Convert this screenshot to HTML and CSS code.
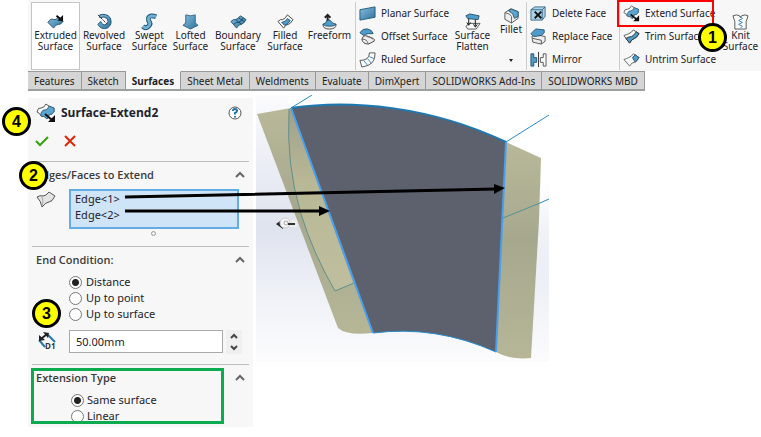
FILE: index.html
```html
<!DOCTYPE html>
<html lang="en">
<head>
<meta charset="utf-8">
<title>Surface-Extend2</title>
<link rel="stylesheet" href="styles.css">
</head>
<body>
<svg class="defs" aria-hidden="true">
  <defs>
    <linearGradient id="steel" x1="0" y1="0" x2="1" y2="1"><stop offset="0" stop-color="#86bfe0"/><stop offset="1" stop-color="#2f7099"/></linearGradient>
    <symbol id="i-extend" viewBox="0 0 20 20">
      <path d="M1 9Q2 4 5 5Q8 5 10 1Q13 4 18 5Q19 9 16 11Q12 11 11 16Q8 12 5 13Q4 10 1 9Z" fill="#fafafa" stroke="#555"/>
      <path d="M5 10Q7 6 9 7Q12 7 13 3L18 5Q19 9 16 11Q12 11 11 16Q9 13 5 13Z" fill="#5ba6d0" stroke="#3a6580"/>
      <path d="M9 11L16 17" stroke="#111" stroke-width="2"/><path d="M19 19V12L12 19Z" fill="#111"/>
    </symbol>
  </defs>
</svg>

<header class="ribbon">
  <button class="tool tool-active">
    <svg class="icon" viewBox="0 0 18 18"><path d="M1 10Q4 5 7 7Q10 8 12 4L17 9Q14 13 12 12Q9 12 7 16Z" fill="url(#steel)" stroke="#1f5273"/><path d="M10 3L14 6" stroke="#111" stroke-width="2"/><path d="M17 2V9L11 8Z" fill="#111"/></svg>
    <span>Extruded<br>Surface</span>
  </button>
  <button class="tool">
    <svg class="icon" viewBox="0 0 18 18"><path d="M4 2Q11 0 15 5Q18 12 12 16Q5 18 2 12L5 9Q7 14 11 12Q14 9 12 6Q9 3 4 5Z" fill="url(#steel)" stroke="#1f5273"/><path d="M2 2L12 12" stroke="#333" stroke-dasharray="3 1"/></svg>
    <span>Revolved<br>Surface</span>
  </button>
  <button class="tool">
    <svg class="icon" viewBox="0 0 18 18"><path d="M2 14Q5 17 8 14Q11 11 8 8Q7 4 11 3Q14 3 16 4" fill="none" stroke="#1f5273" stroke-width="5"/><path d="M2 14Q5 17 8 14Q11 11 8 8Q7 4 11 3Q14 3 16 4" fill="none" stroke="#70b0d6" stroke-width="3"/></svg>
    <span>Swept<br>Surface</span>
  </button>
  <button class="tool">
    <svg class="icon" viewBox="0 0 18 18"><path d="M4 2Q9 4 14 2V10Q15 12 17 13L9 17L1 13Q4 12 4 9Z" fill="url(#steel)" stroke="#2c6489"/></svg>
    <span>Lofted<br>Surface</span>
  </button>
  <button class="tool">
    <svg class="icon" viewBox="0 0 18 18"><path d="M1 9Q4 6 6 7Q9 6 11 3L17 7Q14 12 12 12Q9 12 7 16Z" fill="url(#steel)" stroke="#1f5273"/><path d="M4 12Q7 9 9 10Q12 9 14 5M6 7L12 12M9 5L15 9" fill="none" stroke="#174766"/></svg>
    <span>Boundary<br>Surface</span>
  </button>
  <button class="tool">
    <svg class="icon" viewBox="0 0 18 18"><path d="M1 9Q4 6 6 7Q9 6 11 2L17 7Q14 12 12 12Q9 12 7 16Z" fill="#fafafa" stroke="#444"/><path d="M5 10Q10 9 11 6L14 8Q12 12 8 13Z" fill="#4d9cc9" stroke="#1f5273"/></svg>
    <span>Filled<br>Surface</span>
  </button>
  <button class="tool">
    <svg class="icon" viewBox="0 0 18 18"><path d="M2 12Q2 17 9 17Q16 17 16 12Z" fill="#eee" stroke="#444"/><path d="M2 12Q6 11 6 8Q8 6 10 8Q11 11 16 12Q14 14 9 14Q4 14 2 12Z" fill="#4d9cc9" stroke="#27556f"/><path d="M7 8V2M4 5L7 2L10 5" fill="none" stroke="#222" stroke-width="2"/></svg>
    <span>Freeform</span>
  </button>

  <div class="stack">
    <button class="row"><svg class="icon" viewBox="0 0 18 18"><path d="M1 5L17 2V13L1 16Z" fill="url(#steel)" stroke="#235a7c"/></svg>Planar Surface</button>
    <button class="row"><svg class="icon" viewBox="0 0 18 18"><path d="M3 12Q4 8 7 8L15 11Q17 12 16 14L10 17Q4 17 3 12Z" fill="#eee" stroke="#444"/><path d="M3 12Q8 11 10 17M8 9Q12 9 15 12" fill="none" stroke="#666"/><path d="M1 5Q4 0 9 1Q14 2 15 6L10 6Q7 6 5 8Z" fill="#4d9cc9" stroke="#27556f"/></svg>Offset Surface</button>
    <button class="row"><svg class="icon" viewBox="0 0 18 18"><path d="M11 2L17 2Q18 15 3 17L1 10Q11 10 11 2Z" fill="#fafafa" stroke="#555"/><path d="M11 6L16 8M9 8L13 13M5 10L9 15" stroke="#3388ba"/></svg>Ruled Surface</button>
  </div>

  <button class="tool">
    <svg class="icon" viewBox="0 0 18 18"><path d="M2 14L6 11H17L13 17H4Z" fill="#fafafa" stroke="#555"/><path d="M2 3L6 1L16 3L15 7L4 6Z" fill="#4d9cc9" stroke="#27556f"/><path d="M5 6V12M12 7V14M3 10L5 13L7 10M10 12L12 15L14 12" fill="none" stroke="#111"/></svg>
    <span>Surface<br>Flatten</span>
  </button>
  <button class="tool tool-menu">
    <svg class="icon" viewBox="0 0 18 18"><path d="M2 6L8 2L16 5V12L9 17L2 13Z" fill="#eee" stroke="#555"/><path d="M6 4L9 2L16 5V10L12 12Q12 7 6 4Z" fill="#5aa5d0" stroke="#27556f"/><path d="M2 6Q8 7 9 10V17" fill="none" stroke="#666"/></svg>
    <span>Fillet</span>
    <svg class="caret" viewBox="0 0 6 4"><path d="M1 0H5L3 3Z" fill="#222"/></svg>
  </button>

  <div class="stack">
    <button class="row"><svg class="icon" viewBox="0 0 18 18"><path d="M1 5L5 2H16V12L13 16H1Z" fill="#a9d1e8" stroke="#416f8a"/><path d="M1 5H13V16M13 5L16 2" fill="none" stroke="#416f8a"/><path d="M5 7L12 14M12 7L5 14" stroke="#111" stroke-width="2"/></svg>Delete Face</button>
    <button class="row"><svg class="icon" viewBox="0 0 18 18"><path d="M2 9L6 7L16 9V14L12 17L3 15Z" fill="#eee" stroke="#555"/><path d="M3 11L12 13V17" fill="none" stroke="#555"/><path d="M1 6L6 1L15 2V5L12 8L4 9Z" fill="#4d9cc9" stroke="#27556f"/></svg>Replace Face</button>
    <button class="row"><svg class="icon" viewBox="0 0 18 18"><path d="M1 3H4V7H7V12H4V16H1Z" fill="#4d9cc9" stroke="#27556f"/><path d="M9 1V17" stroke="#333"/><path d="M17 3H14V7H11V12H14V16H17Z" fill="#fafafa" stroke="#555"/></svg>Mirror</button>
  </div>

  <div class="stack">
    <button class="row row-marked"><svg class="icon"><use href="#i-extend"/></svg>Extend Surface<b class="callout callout-1">1</b></button>
    <button class="row"><svg class="icon" viewBox="0 0 18 18"><path d="M1 8Q4 7 6 6Q9 5 11 2L17 6Q14 11 12 11Q9 12 7 16Z" fill="#fafafa" stroke="#555"/><path d="M3 11Q7 9 9 9Q12 8 14 4L17 6Q14 11 12 11Q9 12 7 16Z" fill="#4d9cc9" stroke="#333"/></svg>Trim Surface</button>
    <button class="row"><svg class="icon" viewBox="0 0 18 18"><path d="M1 9Q4 8 6 7Q9 6 11 3L17 7Q14 12 12 12Q9 12 7 16Z" fill="#fafafa" stroke="#666"/><path d="M10 7L13 4L17 7L13 12Z" fill="#4d9cc9" stroke="#27556f"/></svg>Untrim Surface</button>
  </div>

  <button class="tool">
    <svg class="icon" viewBox="0 0 18 18"><path d="M1 3Q5 1 8 3L9 5L10 3Q14 1 17 3Q14 8 15 17H3Q4 8 1 3Z" fill="#fafafa" stroke="#555"/><path d="M8 3L11 6L7 8L11 10L7 12L11 14L9 16" fill="none" stroke="#2f7fad"/></svg>
    <span>Knit<br>Surface</span>
  </button>
</header>

<nav class="tabs">
  <a href="#">Features</a><a href="#">Sketch</a><a href="#" class="current" aria-current="page">Surfaces</a><a href="#">Sheet Metal</a><a href="#">Weldments</a><a href="#">Evaluate</a><a href="#">DimXpert</a><a href="#">SOLIDWORKS Add-Ins</a><a href="#">SOLIDWORKS MBD</a>
</nav>

<main class="workspace">
  <form class="panel">
    <div class="panel-title">
      <svg class="icon icon-large"><use href="#i-extend"/></svg>
      <h1>Surface-Extend2</h1>
      <button type="button" class="plain" aria-label="Help"><svg class="help" viewBox="0 0 14 14"><circle cx="7" cy="7" r="6" fill="#fff" stroke="#555"/><path d="M5 5Q5 3 7 3Q9 3 9 5Q9 6 7 7V8.500M7 10V11.500" fill="none" stroke="#2274a8" stroke-width="2"/></svg></button>
      <b class="callout callout-4">4</b>
    </div>
    <div class="actions">
      <button type="button" class="plain" aria-label="OK"><svg viewBox="0 0 14 12"><path d="M1 6L5 10L13 2" fill="none" stroke="#35a10c" stroke-width="2"/></svg></button>
      <button type="button" class="plain" aria-label="Cancel"><svg viewBox="0 0 14 12"><path d="M2 1L12 11M12 1L2 11" stroke="#df2608" stroke-width="2"/></svg></button>
    </div>

    <section class="group">
      <h2><label for="edges">Edges/Faces to Extend</label><svg class="chevron" viewBox="0 0 10 6"><path d="M1 5L5 1L9 5" fill="none" stroke="#666" stroke-width="2"/></svg></h2>
      <b class="callout callout-2">2</b>
      <div class="field">
        <svg class="icon icon-large" viewBox="0 0 20 20"><path d="M1 8Q4 6 7 7Q10 7 13 3L19 7Q16 13 13 13Q10 13 6 18Q5 12 1 8Z" fill="#e4e4e4" stroke="#555"/><path d="M6 17Q8 12 6 8" fill="none" stroke="#aaa"/></svg>
        <select id="edges" class="selection" multiple size="2"><option>Edge&lt;1&gt;</option><option>Edge&lt;2&gt;</option></select>
      </div>
      <i class="grip"></i>
    </section>

    <section class="group group-end">
      <h2>End Condition:<svg class="chevron" viewBox="0 0 10 6"><path d="M1 5L5 1L9 5" fill="none" stroke="#666" stroke-width="2"/></svg></h2>
      <div class="options">
        <label><input type="radio" name="end" checked>Distance</label>
        <label><input type="radio" name="end">Up to point</label>
        <label><input type="radio" name="end">Up to surface</label>
      </div>
      <b class="callout callout-3">3</b>
      <div class="field field-distance">
        <svg class="icon icon-large" viewBox="0 0 20 20"><path d="M3 10L9 17M12 5L19 12" stroke="#2878ad" stroke-width="2"/><path d="M5 9L11 4" stroke="#222" stroke-width="2"/><path d="M3 11L3 5L9 10ZM13 3L7 2L12 8Z" fill="#222"/><text x="9" y="19" class="icon-text">D1</text></svg>
        <input class="distance" type="text" value="50.00mm" aria-label="Distance">
        <span class="spinner">
          <button type="button" aria-label="Increase"><svg viewBox="0 0 8 6"><path d="M1 5L4 2L7 5" fill="none" stroke="#444" stroke-width="2"/></svg></button>
          <button type="button" aria-label="Decrease"><svg viewBox="0 0 8 6"><path d="M1 1L4 4L7 1" fill="none" stroke="#444" stroke-width="2"/></svg></button>
        </span>
      </div>
    </section>

    <section class="group group-type">
      <h2>Extension Type<svg class="chevron" viewBox="0 0 10 6"><path d="M1 5L5 1L9 5" fill="none" stroke="#666" stroke-width="2"/></svg></h2>
      <div class="options">
        <label><input type="radio" name="type" checked>Same surface</label>
        <label><input type="radio" name="type">Linear</label>
      </div>
    </section>
  </form>

  <svg class="viewport" viewBox="256 95 293 267" role="img" aria-label="Extended surface preview">
    <defs>
      <linearGradient id="sky" x1="0" y1="0" x2="0" y2="1"><stop offset="0" stop-color="#fbfbfd"/><stop offset=".25" stop-color="#eceef5"/><stop offset=".5" stop-color="#dfe3ee"/><stop offset=".75" stop-color="#eff1f7"/><stop offset="1" stop-color="#fcfcfd"/></linearGradient>
      <linearGradient id="fade" gradientUnits="userSpaceOnUse" x1="290" y1="140" x2="310" y2="100"><stop offset="0" stop-color="#fff" stop-opacity="0"/><stop offset="1" stop-color="#fff"/></linearGradient>
      <linearGradient id="fade-right" gradientUnits="userSpaceOnUse" x1="0" y1="180" x2="0" y2="290"><stop offset="0" stop-color="#fff"/><stop offset="1" stop-color="#fff" stop-opacity="0"/></linearGradient>
      <linearGradient id="tan" x1="0" y1="0" x2="0" y2="1"><stop offset="0" stop-color="#b9b899"/><stop offset=".45" stop-color="#a6a88e"/><stop offset="1" stop-color="#b6b697"/></linearGradient>
      <linearGradient id="sliver" x1="0" y1="0" x2="0" y2="1"><stop offset="0" stop-color="#9fa08c"/><stop offset=".4" stop-color="#b8b896"/><stop offset="1" stop-color="#bfbf9f"/></linearGradient>
    </defs>
    <path d="M256 95H549V362H256Z" fill="url(#sky)"/>
    <path d="M288 95H549V142H506L288 120Z" fill="url(#fade)"/>
    <path d="M503 141H549V362H503Z" fill="url(#fade-right)"/>
    <path d="M257 114L291 108L373 333Q347 336 338 328Z" fill="url(#tan)"/>
    <path d="M289 110Q286 165 301 214Q313 253 335 291L353 283L291 108Z" fill="url(#sliver)"/>
    <path d="M289 109Q286 165 301 214Q313 253 335 291L354 283" fill="none" stroke="#5f9089"/>
    <path d="M506 142L541 158L539 220L531 358Q510 360 496 352Z" fill="url(#tan)"/>
    <path d="M291 108C350 99 430 106 506 142L496 352Q436 325 373 333Z" fill="#5d606d"/>
    <path d="M291 108C350 99 430 106 506 142" fill="none" stroke="#1d78b2" stroke-width="2"/>
    <path d="M496 352Q436 325 373 333" fill="none" stroke="#258bca" stroke-width="1"/>
    <path d="M291 108L373 333M506 142L496 352" fill="none" stroke="#479ff0" stroke-width="2"/>
    <path d="M291 108L312 95M506 142L549 115" stroke="#288bc4"/>
    <path d="M503 218L540 203" stroke="#539396"/><path d="M540 203L549 199" stroke="#288bc4"/>
    <path d="M288 220H297V227H288Z" fill="#eee"/><path d="M276 224L283 219V229Z" fill="#222"/><circle cx="285" cy="223" r="5" fill="#f4f4f4" stroke="#ccc"/><circle cx="286" cy="223" r="2" fill="none" stroke="#aaa"/><path d="M288 224H295" stroke="#333" stroke-width="2"/>
  </svg>

  <svg class="leaders" viewBox="120 180 390 40" aria-hidden="true">
    <path d="M125 197L496 189M125 211H321" fill="none" stroke="#000" stroke-width="3"/>
    <path d="M494 184L505 188L494 194ZM319 206L330 211L319 216Z"/>
  </svg>
</main>
</body>
</html>
```

FILE: styles.css
```css
* { box-sizing: border-box; }

body {
  margin: 0;
  background: #fff;
  color: #22222a;
  font: 11px/16px "Noto Sans", "Open Sans", sans-serif;
}

button {
  padding: 0;
  border: 0;
  background: none;
  color: inherit;
  font: inherit;
}

svg { display: block; overflow: visible; }
.defs { position: absolute; width: 0; height: 0; }
.icon { flex: none; width: 17px; height: 17px; }
.icon-large { width: 20px; height: 20px; }
.icon-text { font: bold 8px "Open Sans", sans-serif; fill: #333; }

/* Ribbon */
.ribbon {
  display: grid;
  grid-template-columns: 49px 48px 43px 39px 56px 38px 51px 94px 47px 30px 93px 101px 1fr;
  height: 71px;
  margin-left: 28px;
  padding: 2px 0 1px 3px;
  background: #f7f7f7;
  font-size: 10px;
}

.tool {
  display: flex;
  flex-direction: column;
  align-items: center;
  padding-top: 10px;
  border: 1px solid transparent;
  line-height: 11px;
  white-space: nowrap;
}

.tool-active { border-color: #c4c4c4; background: #fff; }
.tool-menu { padding-top: 4px; }
.caret { width: 6px; height: 4px; margin-top: 24px; }

.stack {
  display: flex;
  flex-direction: column;
  justify-content: space-between;
  padding-left: 3px;
  border-left: 1px solid #ccc;
}

.row {
  position: relative;
  display: flex;
  align-items: center;
  gap: 5px;
  height: 22px;
  white-space: nowrap;
}

.row-marked::before {
  content: "";
  position: absolute;
  inset: -2px 6px -3px -6px;
  border: 2px solid #f00;
}

/* Tabs */
.tabs {
  display: flex;
  width: fit-content;
  margin-left: 28px;
  border-bottom: 2px solid #9b9f9f;
  font-size: 10px;
}

.tabs a {
  padding: 1px 6px 0;
  border: 1px solid #999;
  border-width: 1px 1px 0 0;
  background: #d5d5d5;
  color: #222;
  text-decoration: none;
  white-space: nowrap;
}

.tabs .current { border-top-color: #f7f7f7; background: #f7f7f7; font-weight: bold; }

/* Numbered callouts */
.callout {
  position: absolute;
  z-index: 2;
  width: 29px;
  height: 29px;
  border: 3px solid #000;
  border-radius: 50%;
  background: #ff0;
  color: #000;
  font: bold 16px/23px "Liberation Sans", sans-serif;
  text-align: center;
}

.callout-1 { left: 75px; top: 21px; }
.callout-2 { left: -13px; top: -1px; }
.callout-3 { left: 0; top: 52px; }
.callout-4 { left: -30px; top: 5px; }

/* Property panel */
.workspace {
  position: relative;
  display: flex;
  align-items: flex-start;
  gap: 3px;
  padding: 4px 0 0 28px;
}

.panel {
  flex: none;
  width: 225px;
  margin-top: 3px;
  padding: 4px 4px 0;
  background: #f7f7f7;
}

.panel-title {
  position: relative;
  display: flex;
  align-items: center;
  gap: 5px;
  height: 22px;
  padding: 0 7px 0 4px;
}

h1 { flex: 1; margin: 0; font: bold 12px/16px "Open Sans", sans-serif; }
.help { width: 14px; height: 14px; }

.actions {
  display: flex;
  align-items: flex-start;
  gap: 14px;
  height: 37px;
  padding: 11px 3px;
}

.actions svg { width: 14px; height: 12px; }

.group {
  position: relative;
  height: 85px;
  padding: 5px 4px 0;
  border-top: 1px solid #bcbcbc;
}

h2 {
  display: flex;
  align-items: center;
  justify-content: space-between;
  height: 16px;
  margin: 0;
  color: #3c3c3c;
  font: 600 11px/16px "Open Sans", sans-serif;
}

.chevron { width: 10px; height: 6px; }

.field { display: flex; align-items: flex-start; gap: 13px; margin-top: 6px; }

.selection {
  width: 170px;
  height: 40px;
  padding: 0 2px;
  border: 2px solid #62aee4;
  border-radius: 0;
  background: #cfe4f7;
  color: inherit;
  font: inherit;
  overflow: hidden;
}

.selection option { min-height: 16px; padding: 0 2px; }

.grip {
  display: block;
  width: 5px;
  height: 5px;
  margin: 2px 0 0 115px;
  border: 1px solid #999;
  border-radius: 50%;
}

.group-end { height: 118px; }
.options { margin: 6px 0 0 33px; }
.options label { display: flex; align-items: center; gap: 4px; height: 16px; }

input[type="radio"] {
  appearance: none;
  width: 13px;
  height: 13px;
  margin: 0;
  border: 1px solid #777;
  border-radius: 50%;
  background: #fff;
}

input[type="radio"]:checked { background: radial-gradient(circle, #222 3px, #fff 4px); }

.field-distance { margin-top: 8px; }

.distance {
  width: 154px;
  height: 23px;
  padding: 0 6px;
  border: 1px solid #aaa;
  background: #fff;
  color: inherit;
  font: inherit;
}

.spinner { display: grid; margin-left: -10px; }
.spinner button { padding: 3px 4px; background: #f0f0f0; }
.spinner svg { width: 8px; height: 6px; }

.group-type { height: 63px; }
.group-type .options { margin-left: 35px; }
.group-type .options label { gap: 3px; }

.group-type::after {
  content: "";
  position: absolute;
  inset: 3px 25px 3px -1px;
  border: 3px solid #0cab50;
}

/* Graphics area */
.viewport { flex: none; width: 293px; overflow: hidden; }
.leaders { position: absolute; left: 120px; top: 89px; width: 390px; height: 40px; }
```
